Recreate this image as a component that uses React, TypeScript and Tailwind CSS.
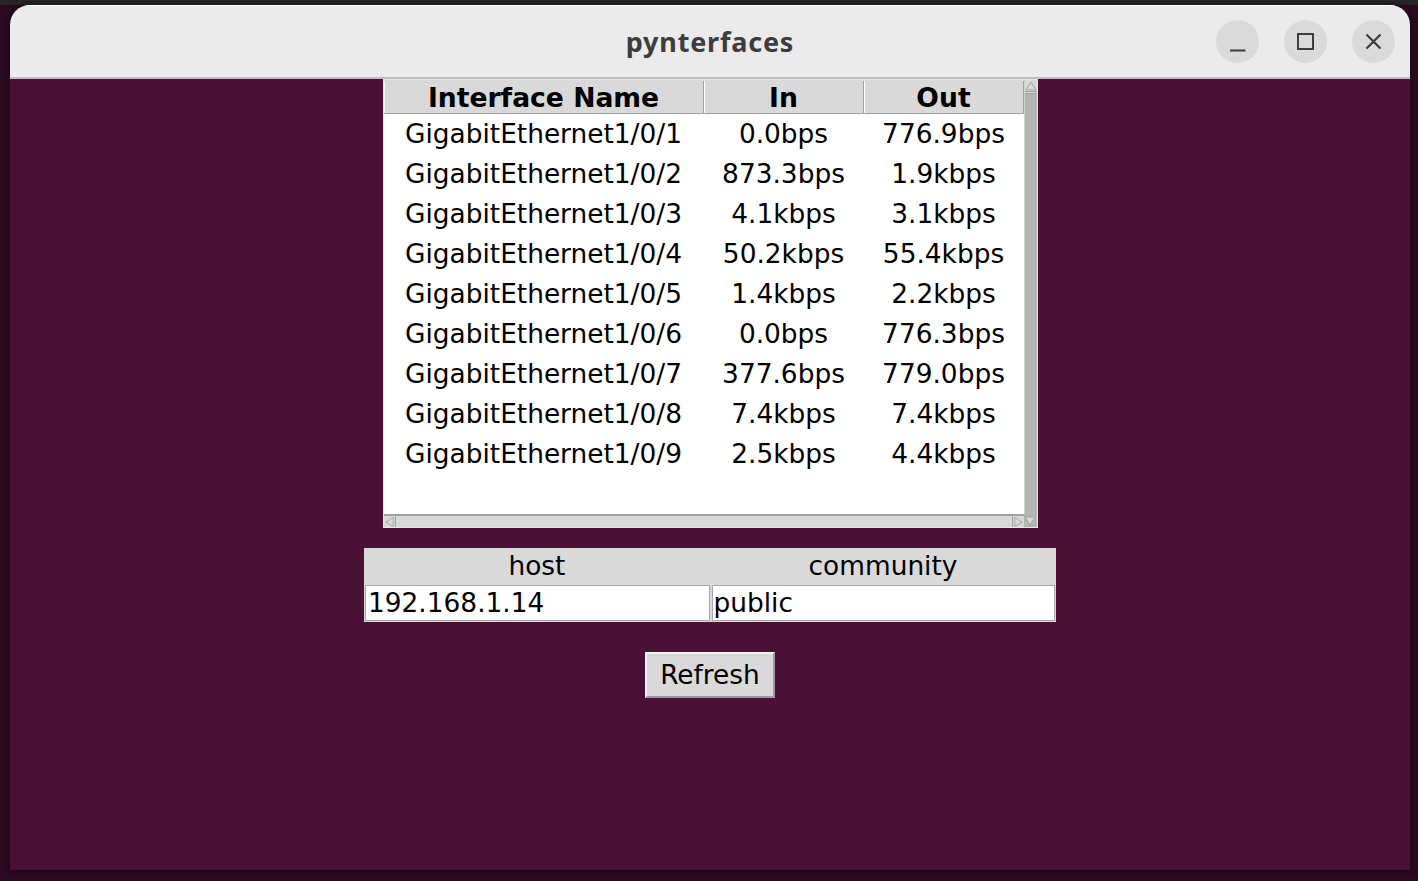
import React from "react";

const rows = [
  ["GigabitEthernet1/0/1", "0.0bps", "776.9bps"],
  ["GigabitEthernet1/0/2", "873.3bps", "1.9kbps"],
  ["GigabitEthernet1/0/3", "4.1kbps", "3.1kbps"],
  ["GigabitEthernet1/0/4", "50.2kbps", "55.4kbps"],
  ["GigabitEthernet1/0/5", "1.4kbps", "2.2kbps"],
  ["GigabitEthernet1/0/6", "0.0bps", "776.3bps"],
  ["GigabitEthernet1/0/7", "377.6bps", "779.0bps"],
  ["GigabitEthernet1/0/8", "7.4kbps", "7.4kbps"],
  ["GigabitEthernet1/0/9", "2.5kbps", "4.4kbps"],
];

const tk = { fontFamily: '"DejaVu Sans", sans-serif' };

function Arrow({ dir }: { dir: "up" | "down" | "left" | "right" }) {
  const pts: Record<string, string> = {
    up: "6,2 11,10 1,10",
    down: "1,2 11,2 6,10",
    left: "2,6 10,1 10,11",
    right: "10,6 2,1 2,11",
  };
  return (
    <svg width="12" height="12" viewBox="0 0 12 12">
      <polygon points={pts[dir]} fill="#d9d9d9" stroke="#a3a3a3" strokeWidth="1" />
    </svg>
  );
}

export default function App() {
  return (
    <div className="w-[1418px] h-[881px] bg-[#2c0a22] flex flex-col overflow-hidden" style={tk}>
      <div className="h-[5px] bg-[#262626] shrink-0" />
      <div className="ml-[10px] w-[1400px] h-[865px] rounded-t-[20px] overflow-hidden flex flex-col bg-[#4a1036] shadow-[0_0_6px_2px_rgba(0,0,0,0.35)]">
        {/* title bar */}
        <div className="h-[72px] shrink-0 bg-[#ebebeb] border-t border-white flex items-center relative">
          <div
            className="flex-1 text-center text-[27px] font-bold text-[#3d3d3d] pt-[2px]"
            style={{ fontFamily: '"Noto Sans", "Open Sans", sans-serif', letterSpacing: "0.8px" }}
          >
            pynterfaces
          </div>
          <div className="absolute right-[15px] top-[14px] flex gap-[25px]">
            <div className="w-[43px] h-[43px] rounded-full bg-[#dadada] flex items-center justify-center">
              <svg width="43" height="43" viewBox="0 0 43 43">
                <line x1="14" y1="30.5" x2="29.5" y2="30.5" stroke="#3d3d3d" strokeWidth="2" />
              </svg>
            </div>
            <div className="w-[43px] h-[43px] rounded-full bg-[#dadada] flex items-center justify-center">
              <svg width="43" height="43" viewBox="0 0 43 43">
                <rect x="14" y="14" width="15" height="15" fill="none" stroke="#3d3d3d" strokeWidth="2" />
              </svg>
            </div>
            <div className="w-[43px] h-[43px] rounded-full bg-[#dadada] flex items-center justify-center">
              <svg width="43" height="43" viewBox="0 0 43 43">
                <path d="M14.5 14.5 L28.5 28.5 M28.5 14.5 L14.5 28.5" stroke="#3d3d3d" strokeWidth="2.2" />
              </svg>
            </div>
          </div>
        </div>
        <div className="h-[2px] bg-[#bdbdbd] shrink-0" />

        {/* body */}
        <div className="flex-1 flex flex-col items-center">
          {/* treeview */}
          <div className="w-[655px] h-[449px] border border-[#e6e6e6] bg-white flex flex-col">
            <div className="flex flex-1 min-h-0">
              <div className="w-[640px] flex flex-col">
                <div className="h-[34px] flex bg-[#d9d9d9] border-t border-t-[#d9d9d9] border-b border-[#9e9e9e] text-[26.6px] font-bold text-black leading-none">
                  <div className="w-[320px] flex items-center justify-center border-r border-[#a0a0a0] border-l border-l-white pt-[3px]">
                    Interface Name
                  </div>
                  <div className="w-[160px] flex items-center justify-center border-r border-[#a0a0a0] border-l border-l-white pt-[3px]">
                    In
                  </div>
                  <div className="w-[160px] flex items-center justify-center border-r border-[#a0a0a0] border-l border-l-white pt-[3px]">
                    Out
                  </div>
                </div>
                <div className="flex flex-col text-[26.4px] text-black">
                  {rows.map((r) => (
                    <div key={r[0]} className="h-[40px] flex items-center leading-none pt-[1px]">
                      <div className="w-[320px] text-center">{r[0]}</div>
                      <div className="w-[160px] text-center">{r[1]}</div>
                      <div className="w-[160px] text-center">{r[2]}</div>
                    </div>
                  ))}
                </div>
              </div>
              <div className="w-[13px] bg-[#b5b5b5] border-l border-[#d0d0d0] flex flex-col">
                <div className="h-[12px] flex items-center justify-center bg-[#d9d9d9] border-b border-[#a3a3a3]">
                  <Arrow dir="up" />
                </div>
                <div className="h-[2px] bg-[#d9d9d9] border-b border-[#a3a3a3]" />
              </div>
            </div>
            <div className="h-[13px] flex shrink-0">
              <div className="w-[640px] bg-[#d9d9d9] border-t-2 border-[#a3a3a3] flex justify-between">
                <div className="w-[12px] flex items-center justify-center border-r border-[#a3a3a3]">
                  <Arrow dir="left" />
                </div>
                <div className="w-[12px] flex items-center justify-center border-l border-[#a3a3a3]">
                  <Arrow dir="right" />
                </div>
              </div>
              <div className="w-[13px] bg-[#b5b5b5] flex items-center justify-center">
                <Arrow dir="down" />
              </div>
            </div>
          </div>

          {/* host / community */}
          <div className="mt-[20px] w-[692px] bg-[#d9d9d9] flex flex-col text-[26.4px] text-black">
            <div className="h-[37px] flex leading-none">
              <div className="w-[346px] flex items-center justify-center">host</div>
              <div className="w-[346px] flex items-center justify-center">community</div>
            </div>
            <div className="h-[37px] flex px-[1px] pb-[1px] gap-[2px]">
              <div className="flex-1 bg-white border border-[#a8a8a8] flex items-center pl-[2px] leading-none">
                192.168.1.14
              </div>
              <div className="flex-1 bg-white border border-[#a8a8a8] flex items-center pl-[1px] leading-none">
                public
              </div>
            </div>
          </div>

          {/* refresh */}
          <div className="mt-[30px] w-[130px] h-[46px] bg-[#d9d9d9] border-2 border-t-[#f2f2f2] border-l-[#f2f2f2] border-r-[#9a9a9a] border-b-[#9a9a9a] flex items-center justify-center text-[26.4px] text-black leading-none">
            Refresh
          </div>
        </div>
      </div>
    </div>
  );
}
